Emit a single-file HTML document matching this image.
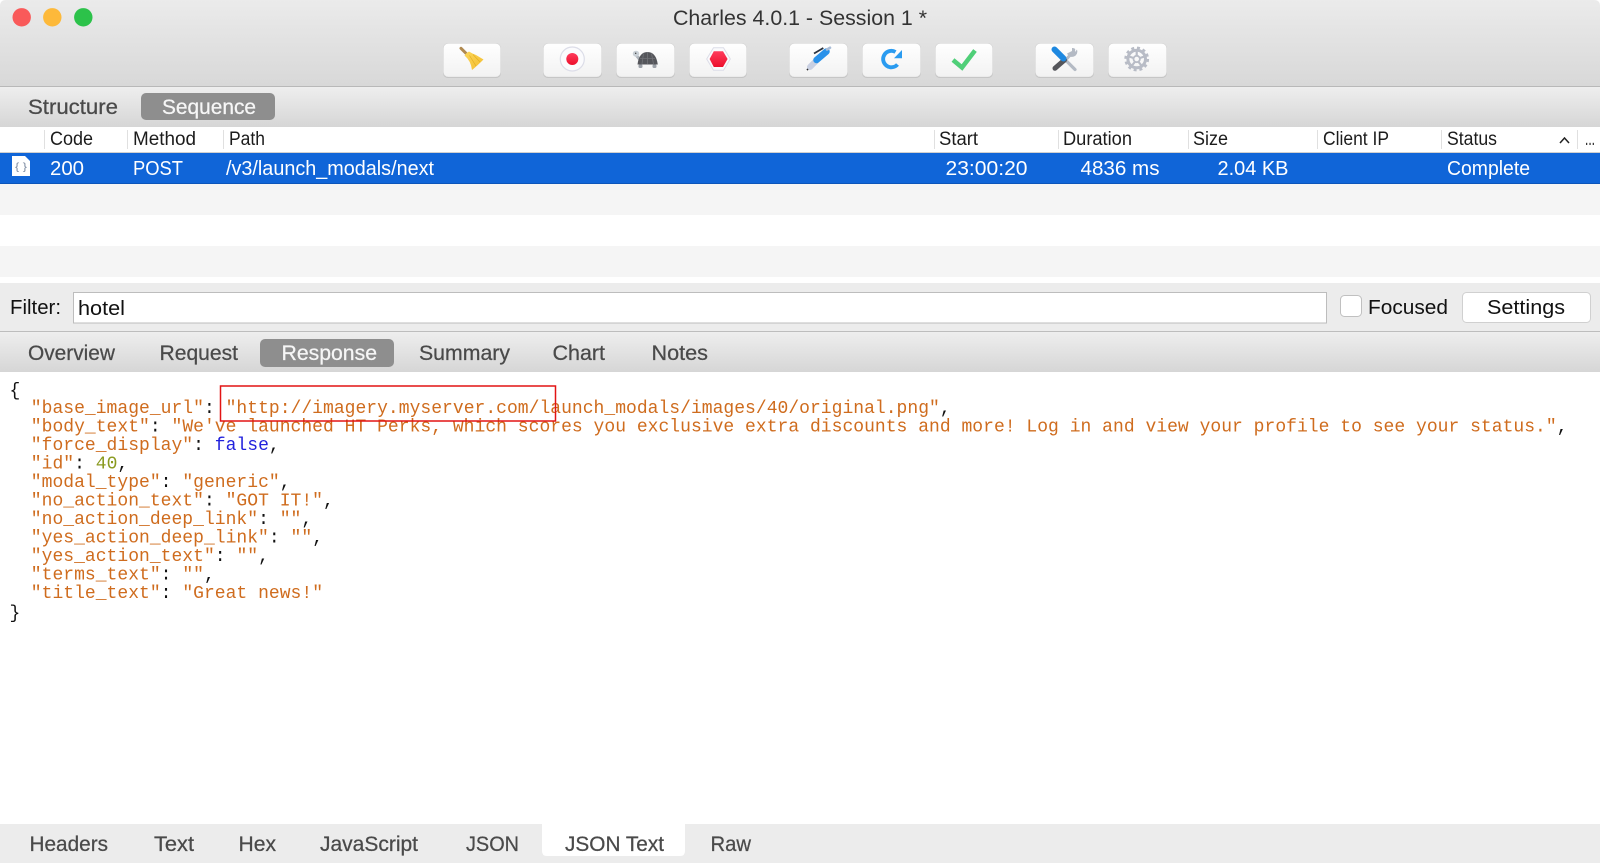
<!DOCTYPE html>
<html><head><meta charset="utf-8"><title>Charles</title>
<style>
html,body{margin:0;padding:0;width:1600px;height:863px;overflow:hidden;background:#fff}
svg{display:block}
text{font-family:"Liberation Sans",sans-serif;white-space:pre}
.t{font-size:21px;fill:#4a4a4a;stroke:#4a4a4a;stroke-width:.25px}
.w{fill:#f6f6f6;stroke:#f6f6f6}
.h{font-size:19px;fill:#1c1c1c}
.r{font-size:20px;fill:#fff}
.f{font-size:20px;fill:#111}
.c{font-family:"Liberation Mono",monospace;font-size:18px;fill:#cf6c1e;white-space:pre;letter-spacing:.02px}
.k{fill:#111}.b{fill:#2222dd}.n{fill:#8a9a20}
</style></head><body>
<svg width="1600" height="863" viewBox="0 0 1600 863" xmlns="http://www.w3.org/2000/svg">
<defs>
<linearGradient id="g1" x1="0" y1="0" x2="0" y2="1"><stop offset="0" stop-color="#ebebeb"/><stop offset="1" stop-color="#d8d8d8"/></linearGradient>
<linearGradient id="g2" x1="0" y1="0" x2="0" y2="1"><stop offset="0" stop-color="#eeeeee"/><stop offset="1" stop-color="#d6d6d6"/></linearGradient>
<linearGradient id="btn" x1="0" y1="0" x2="0" y2="1"><stop offset="0" stop-color="#ffffff"/><stop offset="1" stop-color="#f2f2f2"/></linearGradient>
<linearGradient id="red" x1="0" y1="0" x2="0" y2="1"><stop offset="0" stop-color="#ff3b5c"/><stop offset="1" stop-color="#ec0f2c"/></linearGradient>
<linearGradient id="yel" x1="0" y1="0" x2="1" y2="1"><stop offset="0" stop-color="#fbd65a"/><stop offset="1" stop-color="#f3bd2e"/></linearGradient>
</defs>
<rect width="1600" height="863" fill="#fff"/>
<!-- title bar -->
<path d="M0,86V6Q0,0 6,0H1594Q1600,0 1600,6V86Z" fill="url(#g1)"/>
<rect y="86" width="1600" height="1" fill="#b8b8b8"/>
<circle cx="21.700" cy="17.300" r="9.200" fill="#f95a5a"/>
<circle cx="52.300" cy="17.300" r="9.200" fill="#fdb93a"/>
<circle cx="83.300" cy="17.300" r="9.200" fill="#2cc24a"/>
<text x="673" y="25" style="font-size:21px;fill:#333" textLength="254" lengthAdjust="spacingAndGlyphs">Charles 4.0.1 - Session 1 *</text>

<!-- toolbar buttons -->
<g fill="#c0c0c0">
<rect x="443" y="43.500" width="58" height="34.500" rx="5"/><rect x="543" y="43.500" width="59" height="34.500" rx="5"/><rect x="616" y="43.500" width="59" height="34.500" rx="5"/><rect x="689" y="43.500" width="58" height="34.500" rx="5"/><rect x="789" y="43.500" width="59" height="34.500" rx="5"/><rect x="862" y="43.500" width="59" height="34.500" rx="5"/><rect x="935" y="43.500" width="58" height="34.500" rx="5"/><rect x="1035" y="43.500" width="59" height="34.500" rx="5"/><rect x="1108" y="43.500" width="59" height="34.500" rx="5"/>
</g>
<g fill="url(#btn)" stroke="#d6d6d6" stroke-width=".6">
<rect x="443.300" y="43.300" width="57.400" height="33.700" rx="5"/><rect x="543.300" y="43.300" width="58.400" height="33.700" rx="5"/><rect x="616.300" y="43.300" width="58.400" height="33.700" rx="5"/><rect x="689.300" y="43.300" width="57.400" height="33.700" rx="5"/><rect x="789.300" y="43.300" width="58.400" height="33.700" rx="5"/><rect x="862.300" y="43.300" width="58.400" height="33.700" rx="5"/><rect x="935.300" y="43.300" width="57.400" height="33.700" rx="5"/><rect x="1035.300" y="43.300" width="58.400" height="33.700" rx="5"/><rect x="1108.300" y="43.300" width="58.400" height="33.700" rx="5"/>
</g>
<!-- broom -->
<path d="M461,48.300L466,53.300" stroke="#b08a50" stroke-width="3" stroke-linecap="round"/>
<path d="M464.500,55.500Q466,53 469,51.500Q472,53.500 476,55L483.500,59.500Q477,66 472,70Q471,61 464.500,55.500Z" fill="url(#yel)"/>
<path d="M469.500,55.500L476,66M473,54.500L480,62" stroke="#e3ae22" stroke-width=".7" fill="none"/>
<!-- record -->
<circle cx="572.300" cy="59" r="12" fill="#fbfbfd" stroke="#dcdde8" stroke-width="1.200"/>
<circle cx="572.300" cy="59" r="6" fill="url(#red)"/>
<!-- turtle -->
<path d="M636,55L641,61" stroke="#aeb4bb" stroke-width="3"/>
<ellipse cx="636" cy="53.700" rx="3.200" ry="3" fill="#c9d0d6"/>
<circle cx="635.700" cy="53.300" r=".7" fill="#333"/>
<path d="M637.500,64.500Q639,52 647.500,52Q656,52 657.800,64.500Z" fill="#55565b"/>
<path d="M640,58.500H655M647.500,52V64M643.500,53.500L642,64M651.500,53.500L653.500,64" stroke="#727378" stroke-width=".8" fill="none"/>
<rect x="638.500" y="64.500" width="4" height="3.500" rx="1.200" fill="#9ba0a7"/><rect x="652.500" y="64.500" width="4" height="3.500" rx="1.200" fill="#9ba0a7"/>
<!-- stop -->
<path d="M713.500,47.800H723.500L730.300,59L723.500,70.200H713.500L706.700,59Z" fill="#fafafc" stroke="#dcdde8"/>
<path d="M713.800,51.300H723L727.600,59L723,67H713.800L709.600,59Z" fill="url(#red)"/>
<!-- pen -->
<path d="M807,70L809.500,67.500" stroke="#222" stroke-width="1.600"/>
<path d="M810,67L816,61" stroke="#c9d0e2" stroke-width="6" stroke-linecap="round"/>
<path d="M816.500,60L826.500,51.500" stroke="#2a92ea" stroke-width="6.500" stroke-linecap="round"/>
<path d="M814,53.500L823.300,48" stroke="#2c3440" stroke-width="1.800" fill="none"/>
<path d="M827,49.500L830,47.800" stroke="#a9bcd6" stroke-width="2.600" stroke-linecap="round"/>
<!-- refresh -->
<path d="M897.500,64.500A8.200,8.200 0 1 1 895.500,52" fill="none" stroke="#2a9bf0" stroke-width="3.900"/>
<path d="M902,50V58.200H894Z" fill="#2a9bf0"/>
<!-- check -->
<path d="M953,60L962,67.500L975,50.500" fill="none" stroke="#4fcf78" stroke-width="4.500"/>
<!-- tools -->
<path d="M1067,61.500L1075,69.500" stroke="#b4bac4" stroke-width="3.200" stroke-linecap="round"/>
<path d="M1064,62L1071,54" stroke="#b4bac4" stroke-width="3"/>
<path d="M1077,49.500A5.200,5.200 0 1 1 1067,53.500L1072,51L1072,48Q1074,47.800 1075.200,49L1075,52Z" fill="#b4bac4"/>
<path d="M1055,68.300L1064.500,60" stroke="#55565b" stroke-width="5" stroke-linecap="round"/>
<path d="M1054.500,49.500L1063.500,58.500" stroke="#1e88e0" stroke-width="6" stroke-linecap="round"/>
<!-- gear -->
<circle cx="1136.700" cy="59" r="11.200" fill="none" stroke="#b8bcc6" stroke-width="2.400" stroke-dasharray="3 2.860"/>
<circle cx="1136.700" cy="59" r="8.800" fill="none" stroke="#b8bcc6" stroke-width="3"/>
<circle cx="1136.700" cy="59" r="3.200" fill="none" stroke="#b8bcc6" stroke-width="1.800"/>
<path d="M1136.700,51V55.500M1129,56.500L1133.500,58M1144.400,56.500L1139.900,58M1132,65.500L1134.800,62M1141.400,65.500L1138.600,62" stroke="#b8bcc6" stroke-width="2.200"/>

<!-- structure tabs -->
<rect y="87" width="1600" height="40" fill="url(#g2)"/>
<rect x="141" y="93" width="134" height="27" rx="5" fill="#8e8e8e"/>
<text class="t" x="28" y="114" textLength="90" lengthAdjust="spacingAndGlyphs">Structure</text>
<text class="t w" x="162" y="114" textLength="94" lengthAdjust="spacingAndGlyphs">Sequence</text>

<!-- header -->
<rect y="127" width="1600" height="26" fill="#fff"/>
<g fill="#e0e0e0">
<rect x="44" y="130" width="1" height="19"/><rect x="127" y="130" width="1" height="19"/><rect x="223" y="130" width="1" height="19"/><rect x="934" y="130" width="1" height="19"/><rect x="1058" y="130" width="1" height="19"/><rect x="1188" y="130" width="1" height="19"/><rect x="1317" y="130" width="1" height="19"/><rect x="1441" y="130" width="1" height="19"/><rect x="1577" y="130" width="1" height="19"/>
</g>
<text class="h" x="50" y="145" textLength="43" lengthAdjust="spacingAndGlyphs">Code</text>
<text class="h" x="133" y="145" textLength="63" lengthAdjust="spacingAndGlyphs">Method</text>
<text class="h" x="229" y="145" textLength="36" lengthAdjust="spacingAndGlyphs">Path</text>
<text class="h" x="939" y="145" textLength="39" lengthAdjust="spacingAndGlyphs">Start</text>
<text class="h" x="1063" y="145" textLength="69" lengthAdjust="spacingAndGlyphs">Duration</text>
<text class="h" x="1193" y="145" textLength="35" lengthAdjust="spacingAndGlyphs">Size</text>
<text class="h" x="1323" y="145" textLength="66" lengthAdjust="spacingAndGlyphs">Client IP</text>
<text class="h" x="1447" y="145" textLength="50" lengthAdjust="spacingAndGlyphs">Status</text>
<path d="M1560,143L1564.500,138L1569,143" fill="none" stroke="#222" stroke-width="1.500"/>
<text class="h" x="1585" y="145" style="font-size:20px" textLength="10" lengthAdjust="spacingAndGlyphs">...</text>
<rect y="152" width="1600" height="1" fill="#d0d0d0"/>

<!-- selected row -->
<rect y="153" width="1600" height="31" fill="#1065d8"/>
<rect y="183" width="1600" height="1" fill="#0c55ba"/>
<path d="M12,156H25L30,161V176H12Z" fill="#fff"/>
<text x="15" y="170" style="font-size:10px;fill:#7c8aa0" textLength="12" lengthAdjust="spacingAndGlyphs">{ }</text>
<text class="r" x="50" y="175" textLength="34" lengthAdjust="spacingAndGlyphs">200</text>
<text class="r" x="133" y="175" textLength="50" lengthAdjust="spacingAndGlyphs">POST</text>
<text class="r" x="226" y="175" textLength="208" lengthAdjust="spacingAndGlyphs">/v3/launch_modals/next</text>
<text class="r" x="945.500" y="175" textLength="82" lengthAdjust="spacingAndGlyphs">23:00:20</text>
<text class="r" x="1080.500" y="175" textLength="79" lengthAdjust="spacingAndGlyphs">4836 ms</text>
<text class="r" x="1217.500" y="175" textLength="71" lengthAdjust="spacingAndGlyphs">2.04 KB</text>
<text class="r" x="1447" y="175" textLength="83" lengthAdjust="spacingAndGlyphs">Complete</text>

<!-- stripes -->
<rect y="184" width="1600" height="31" fill="#f5f5f5"/>
<rect y="246" width="1600" height="31" fill="#f5f5f5"/>

<!-- filter bar -->
<rect y="283" width="1600" height="48" fill="#ececec"/>
<rect y="331" width="1600" height="1" fill="#bdbdbd"/>
<text class="f" x="10" y="314" textLength="51" lengthAdjust="spacingAndGlyphs">Filter:</text>
<rect x="73.500" y="292.500" width="1253" height="30.500" fill="#fff" stroke="#bdbdbd"/>
<text class="f" x="78" y="315" textLength="47" lengthAdjust="spacingAndGlyphs">hotel</text>
<rect x="1340.500" y="295.500" width="21" height="21" rx="4" fill="#fff" stroke="#c0c0c0"/>
<text class="f" x="1368" y="314" textLength="80" lengthAdjust="spacingAndGlyphs">Focused</text>
<rect x="1462.500" y="292.500" width="128" height="30" rx="4" fill="#fff" stroke="#d0d0d0"/>
<text class="f" x="1487" y="314" textLength="78" lengthAdjust="spacingAndGlyphs">Settings</text>

<!-- detail tabs -->
<rect y="332" width="1600" height="40" fill="url(#g2)"/>
<rect x="260" y="339" width="134" height="28" rx="5" fill="#8e8e8e"/>
<text class="t" x="28" y="360" textLength="87" lengthAdjust="spacingAndGlyphs">Overview</text>
<text class="t" x="159.500" y="360" textLength="78.500" lengthAdjust="spacingAndGlyphs">Request</text>
<text class="t w" x="281.500" y="360" textLength="95.500" lengthAdjust="spacingAndGlyphs">Response</text>
<text class="t" x="419" y="360" textLength="91" lengthAdjust="spacingAndGlyphs">Summary</text>
<text class="t" x="552.500" y="360" textLength="52.500" lengthAdjust="spacingAndGlyphs">Chart</text>
<text class="t" x="651.500" y="360" textLength="56.500" lengthAdjust="spacingAndGlyphs">Notes</text>

<!-- code -->
<text class="c" x="9.500" y="395.500"><tspan class="k">{</tspan></text>
<text class="c" x="30.800" y="413">"base_image_url"<tspan class="k">: </tspan>"http://imagery.myserver.com/launch_modals/images/40/original.png"<tspan class="k">,</tspan></text>
<text class="c" x="30.800" y="431.500">"body_text"<tspan class="k">: </tspan>"We've launched HT Perks, which scores you exclusive extra discounts and more! Log in and view your profile to see your status."<tspan class="k">,</tspan></text>
<text class="c" x="30.800" y="450">"force_display"<tspan class="k">: </tspan><tspan class="b">false</tspan><tspan class="k">,</tspan></text>
<text class="c" x="30.800" y="468.500">"id"<tspan class="k">: </tspan><tspan class="n">40</tspan><tspan class="k">,</tspan></text>
<text class="c" x="30.800" y="487">"modal_type"<tspan class="k">: </tspan>"generic"<tspan class="k">,</tspan></text>
<text class="c" x="30.800" y="505.500">"no_action_text"<tspan class="k">: </tspan>"GOT IT!"<tspan class="k">,</tspan></text>
<text class="c" x="30.800" y="524">"no_action_deep_link"<tspan class="k">: </tspan>""<tspan class="k">,</tspan></text>
<text class="c" x="30.800" y="542.500">"yes_action_deep_link"<tspan class="k">: </tspan>""<tspan class="k">,</tspan></text>
<text class="c" x="30.800" y="561">"yes_action_text"<tspan class="k">: </tspan>""<tspan class="k">,</tspan></text>
<text class="c" x="30.800" y="579.500">"terms_text"<tspan class="k">: </tspan>""<tspan class="k">,</tspan></text>
<text class="c" x="30.800" y="598">"title_text"<tspan class="k">: </tspan>"Great news!"</text>
<text class="c" x="9.500" y="618"><tspan class="k">}</tspan></text>
<rect x="220.500" y="386" width="335" height="35" fill="none" stroke="#e21414" stroke-width="1.500"/>

<!-- bottom tabs -->
<rect y="824" width="1600" height="39" fill="#ececec"/>
<path d="M542,824H685V851Q685,856 680,856H547Q542,856 542,851Z" fill="#fff"/>
<text class="t" x="29.500" y="851" textLength="78.500" lengthAdjust="spacingAndGlyphs">Headers</text>
<text class="t" x="154" y="851" textLength="40" lengthAdjust="spacingAndGlyphs">Text</text>
<text class="t" x="238.500" y="851" textLength="37.500" lengthAdjust="spacingAndGlyphs">Hex</text>
<text class="t" x="320" y="851" textLength="98" lengthAdjust="spacingAndGlyphs">JavaScript</text>
<text class="t" x="466" y="851" textLength="53" lengthAdjust="spacingAndGlyphs">JSON</text>
<text class="t" x="565" y="851" textLength="99" lengthAdjust="spacingAndGlyphs">JSON Text</text>
<text class="t" x="710.500" y="851" textLength="40.500" lengthAdjust="spacingAndGlyphs">Raw</text>
</svg>
</body></html>
